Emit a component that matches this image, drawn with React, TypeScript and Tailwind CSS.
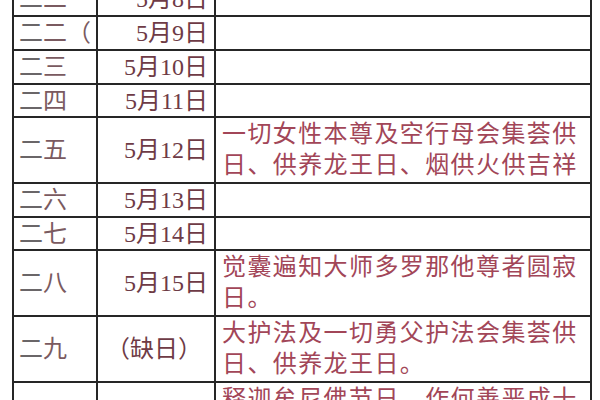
const rows: { a: string; b: string; d: string[]; h: string; center?: boolean }[] = [
  { a: "二二", b: "5月8日", d: [], h: "h-[32px]" },
  { a: "二二（", b: "5月9日", d: [], h: "h-[32px]" },
  { a: "二三", b: "5月10日", d: [], h: "h-[32px]" },
  { a: "二四", b: "5月11日", d: [], h: "h-[31px]" },
  {
    a: "二五",
    b: "5月12日",
    d: ["一切女性本尊及空行母会集荟供", "日、供养龙王日、烟供火供吉祥"],
    h: "h-[64px]",
  },
  { a: "二六", b: "5月13日", d: [], h: "h-[32px]" },
  { a: "二七", b: "5月14日", d: [], h: "h-[31px]" },
  {
    a: "二八",
    b: "5月15日",
    d: ["觉囊遍知大师多罗那他尊者圆寂", "日。"],
    h: "h-[64px]",
  },
  {
    a: "二九",
    b: "（缺日）",
    d: ["大护法及一切勇父护法会集荟供", "日、供养龙王日。"],
    h: "h-[64px]",
    center: true,
  },
  {
    a: "",
    b: "",
    d: ["释迦牟尼佛节日，作何善恶成十", "万倍。"],
    h: "h-[64px]",
  },
];

const font = { fontFamily: '"Liberation Serif", "Noto Sans CJK SC", serif' };

export default function App() {
  return (
    <div className="w-[600px] h-[400px] overflow-hidden bg-white" style={font}>
      <div className="ml-[12px] mt-[-19px] w-[580px] grid grid-cols-[82px_116px_374px] gap-[2px] p-[2px] bg-[#262626] text-[24px]">
        {rows.map((r, i) => (
          <div key={i} className="contents">
            <div className={`${r.h} bg-white pl-[5px] flex items-center overflow-hidden whitespace-nowrap`}>
              <span className="text-[#6a6668]">{r.a.slice(0, 1)}</span>
              <span className="text-[#7a5a60]">{r.a.slice(1)}</span>
            </div>
            <div
              className={`${r.h} bg-white flex items-center whitespace-nowrap text-[#6e3b46] ${
                r.center ? "justify-center pr-[4px]" : "justify-end pr-[6px]"
              }`}
            >
              {r.b}
            </div>
            <div
              className={`${r.h} bg-white pl-[6px] flex flex-col ${
                i === rows.length - 1 ? "justify-start pt-[1px]" : "justify-center"
              } text-[#a24658] tracking-[1.4px] leading-[31px] overflow-hidden whitespace-nowrap`}
            >
              {r.d.map((line, j) => (
                <div key={j}>{line}</div>
              ))}
            </div>
          </div>
        ))}
      </div>
    </div>
  );
}
